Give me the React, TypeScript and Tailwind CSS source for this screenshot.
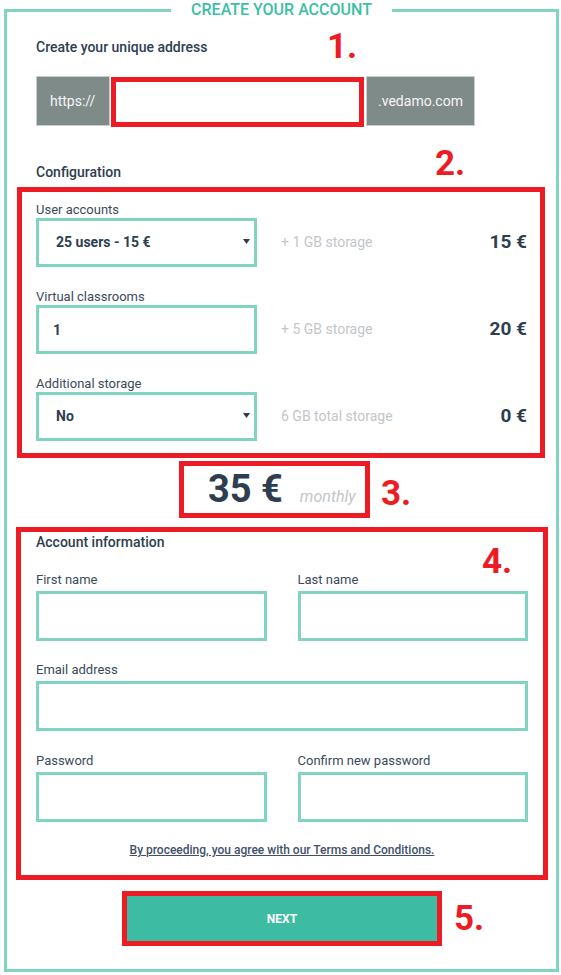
import type { ReactNode } from "react";

const teal = "border-[#80d4c1]";
const red = "border-[#ed1c24]";

function Mark({ n, x, y }: { n: number; x: string; y: string }) {
  return (
    <div
      className={`absolute ${x} ${y} text-[35px] leading-none font-bold text-[#ed1c24]`}
    >
      {n}.
    </div>
  );
}

function Arrow() {
  return (
    <svg
      className="pointer-events-none absolute right-[7px] top-[21px]"
      width="7"
      height="5"
      viewBox="0 0 7 5"
    >
      <polygon points="0,0 7,0 3.5,5" fill="#2d3e50" />
    </svg>
  );
}

function ConfigRow({
  label,
  control,
  note,
  price,
  first,
}: {
  label: string;
  control: ReactNode;
  note: string;
  price: string;
  first?: boolean;
}) {
  return (
    <div className={first ? "" : "mt-[22px]"}>
      <div className="text-[13px] leading-[16px] text-[#3b4a5c]">{label}</div>
      <div className="flex items-center">
        {control}
        <div className="ml-[24px] flex-1 text-[14px] text-[#c2c6ca]">{note}</div>
        <div className="text-[19px] font-bold text-[#2d3e50]">{price}</div>
      </div>
    </div>
  );
}

function Field({ label, className = "" }: { label: string; className?: string }) {
  return (
    <div className={className}>
      <div className="text-[13px] leading-[16px] text-[#3b4a5c]">{label}</div>
      <input
        className={`mt-[3px] block w-full h-[50px] border-[3px] ${teal} bg-white outline-none`}
      />
    </div>
  );
}

export default function App() {
  const selectCls = `w-[221px] h-[49px] border-[3px] ${teal} bg-white pl-[17px] text-[14px] font-bold text-[#2d3e50] appearance-none outline-none`;

  return (
    <div className="relative w-[561px] h-[975px] bg-white font-['Roboto',sans-serif]">
      <fieldset className={`ml-[4px] w-[555px] h-[972px] border-[3px] ${teal}`}>
        <legend className="mx-auto px-[20px] text-[16px] leading-[20px] font-medium text-[#3cbfa5]">
          CREATE YOUR ACCOUNT
        </legend>

        {/* Address */}
        <div className="ml-[29px] mt-[17px] text-[14px] leading-[20px] font-medium text-[#2d3e50]">
          Create your unique address
        </div>
        <div className="ml-[29px] mt-[19px] flex items-start h-[51px]">
          <div className="w-[74px] h-[50px] bg-[#7f8b89] border border-[#c9cdcc] flex items-center pl-[13px] text-[14px] text-[#f5f5f5]">
            https://
          </div>
          <input
            className={`ml-[1px] mt-[1px] w-[253px] h-[50px] border-[5px] ${red} bg-white outline-none`}
          />
          <div className="ml-[2px] w-[109px] h-[50px] bg-[#7f8b89] border border-[#c9cdcc] flex items-center justify-center text-[14px] text-[#f5f5f5]">
            .vedamo.com
          </div>
        </div>

        {/* Configuration */}
        <div className="ml-[29px] mt-[35px] text-[14px] leading-[20px] font-medium text-[#2d3e50]">
          Configuration
        </div>
        <div className={`ml-[10px] mt-[5px] w-[528px] border-[5px] ${red} pt-[10px] pb-[12px] pl-[14px] pr-[13px]`}>
          <ConfigRow
            first
            label="User accounts"
            note="+ 1 GB storage"
            price="15 €"
            control={
              <div className="relative">
                <select className={selectCls} defaultValue="25">
                  <option value="25">25 users - 15 €</option>
                </select>
                <Arrow />
              </div>
            }
          />
          <ConfigRow
            label="Virtual classrooms"
            note="+ 5 GB storage"
            price="20 €"
            control={
              <input
                className={`w-[221px] h-[49px] border-[3px] ${teal} bg-white pl-[14px] text-[14px] font-bold text-[#2d3e50] outline-none`}
                defaultValue="1"
              />
            }
          />
          <ConfigRow
            label="Additional storage"
            note="6 GB total storage"
            price="0 €"
            control={
              <div className="relative">
                <select className={selectCls} defaultValue="no">
                  <option value="no">No</option>
                </select>
                <Arrow />
              </div>
            }
          />
        </div>

        {/* Total */}
        <div className={`ml-[172px] mt-[3px] w-[191px] h-[57px] border-[5px] ${red} flex items-baseline pl-[24px] pt-[4px]`}>
          <span className="text-[38px] leading-none font-bold text-[#2d3e50]">35 €</span>
          <span className="ml-[17px] text-[16px] italic text-[#c2c6ca]">monthly</span>
        </div>

        {/* Account information */}
        <div className={`ml-[9px] mt-[9px] w-[532px] border-[5px] ${red} px-[15px] pb-[17px]`}>
          <div className="text-[14px] leading-[20px] font-medium text-[#2d3e50]">
            Account information
          </div>
          <div className="mt-[20px] grid grid-cols-2 gap-x-[31px]">
            <Field label="First name" />
            <Field label="Last name" />
          </div>
          <Field label="Email address" className="mt-[21px]" />
          <div className="mt-[22px] grid grid-cols-2 gap-x-[31px]">
            <Field label="Password" />
            <Field label="Confirm new password" />
          </div>
          <div className="mt-[20px] text-center text-[12px] leading-[16px] font-medium text-[#3f516a] underline">
            By proceeding, you agree with our Terms and Conditions.
          </div>
        </div>

        {/* Next */}
        <div className={`ml-[115px] mt-[11px] w-[320px] h-[55px] border-[5px] ${red}`}>
          <button className="w-full h-full bg-[#3dbca3] text-white text-[12px] font-bold">
            NEXT
          </button>
        </div>
      </fieldset>

      <Mark n={1} x="left-[327px]" y="top-[29px]" />
      <Mark n={2} x="left-[435px]" y="top-[146px]" />
      <Mark n={3} x="left-[381px]" y="top-[476px]" />
      <Mark n={4} x="left-[482px]" y="top-[544px]" />
      <Mark n={5} x="left-[454px]" y="top-[901px]" />
    </div>
  );
}
